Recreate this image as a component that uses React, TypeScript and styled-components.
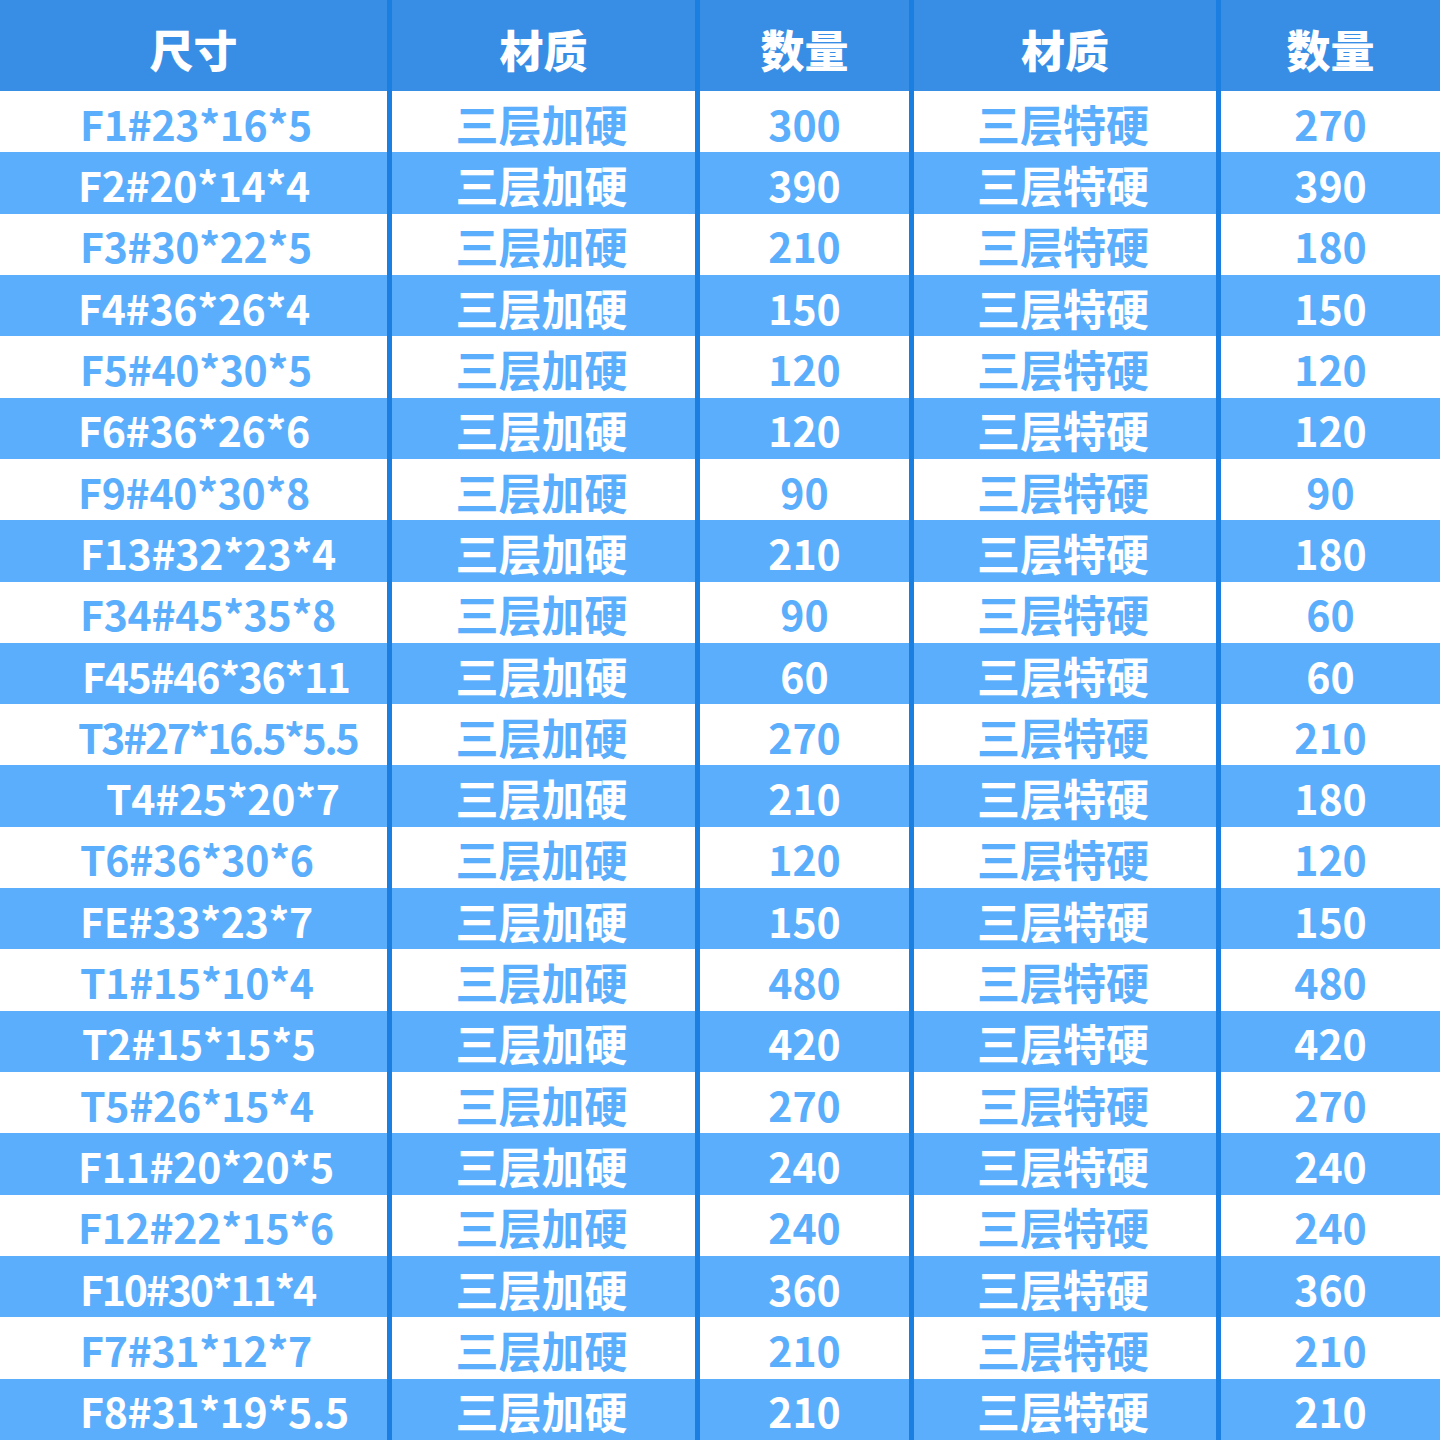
import React from 'react';
import styled, { createGlobalStyle } from 'styled-components';

const GlobalStyle = createGlobalStyle`
  html, body {
    margin: 0;
    padding: 0;
    background: #ffffff;
  }
  body {
    font-family: 'Noto Sans CJK SC', 'Noto Sans', sans-serif;
  }
`;

const Table = styled.div`
  width: 1440px;
  height: 1440px;
  display: grid;
  grid-template-rows: 91px repeat(22, 1fr);
  overflow: hidden;
`;

const Row = styled.div<{ $striped?: boolean; $head?: boolean }>`
  display: grid;
  grid-template-columns: 387px 303px 209px 302px 1fr;
  column-gap: 5px;
  background: #1b7fe2;
  color: ${(p) => (p.$head || p.$striped ? '#ffffff' : '#5aaefb')};
  & > div {
    background: ${(p) =>
      p.$head ? '#388ee5' : p.$striped ? '#5aaefb' : '#ffffff'};
  }
`;

const Cell = styled.div`
  display: flex;
  align-items: center;
  justify-content: center;
  font-size: 41px;
  font-weight: 700;
  line-height: 1;
  white-space: nowrap;
  padding-top: 3px;
`;

const HeadCell = styled(Cell)`
  font-size: 44px;
  font-weight: 900;
  padding-top: 6px;
`;

const SizeCell = styled(Cell)<{ $indent: number; $spacing: number }>`
  justify-content: flex-start;
  padding-left: ${(p) => p.$indent}px;
  letter-spacing: ${(p) => p.$spacing}px;
`;

const MaterialCell = styled(Cell)`
  font-size: 43px;
  padding-right: 4px;
`;

// size, 加硬 qty, 特硬 qty, left indent, letter spacing
const rows: [string, number, number, number, number][] = [
  ['F1#23*16*5', 300, 270, 80, -0.3],
  ['F2#20*14*4', 390, 390, 78, -0.3],
  ['F3#30*22*5', 210, 180, 80, -0.3],
  ['F4#36*26*4', 150, 150, 78, -0.3],
  ['F5#40*30*5', 120, 120, 80, -0.3],
  ['F6#36*26*6', 120, 120, 78, -0.3],
  ['F9#40*30*8', 90, 90, 78, -0.3],
  ['F13#32*23*4', 210, 180, 80, -0.3],
  ['F34#45*35*8', 90, 60, 80, -0.3],
  ['F45#46*36*11', 60, 60, 82, -1.3],
  ['T3#27*16.5*5.5', 270, 210, 78, -2.3],
  ['T4#25*20*7', 210, 180, 106, -0.3],
  ['T6#36*30*6', 120, 120, 80, -0.3],
  ['FE#33*23*7', 150, 150, 80, -0.3],
  ['T1#15*10*4', 480, 480, 80, -0.3],
  ['T2#15*15*5', 420, 420, 82, -0.3],
  ['T5#26*15*4', 270, 270, 80, -0.3],
  ['F11#20*20*5', 240, 240, 78, -0.3],
  ['F12#22*15*6', 240, 240, 78, -0.3],
  ['F10#30*11*4', 360, 360, 80, -2.2],
  ['F7#31*12*7', 210, 210, 80, -0.3],
  ['F8#31*19*5.5', 210, 210, 80, -0.3],
];

const App: React.FC = () => {
  return (
    <>
      <GlobalStyle />
      <Table>
        <Row $head>
          <HeadCell>尺寸</HeadCell>
          <HeadCell>材质</HeadCell>
          <HeadCell>数量</HeadCell>
          <HeadCell>材质</HeadCell>
          <HeadCell>数量</HeadCell>
        </Row>
        {rows.map(([size, a, b, indent, spacing], index) => (
          <Row key={size} $striped={index % 2 === 1}>
            <SizeCell $indent={indent} $spacing={spacing}>
              {size}
            </SizeCell>
            <MaterialCell>三层加硬</MaterialCell>
            <Cell>{a}</Cell>
            <MaterialCell>三层特硬</MaterialCell>
            <Cell>{b}</Cell>
          </Row>
        ))}
      </Table>
    </>
  );
};

export default App;
